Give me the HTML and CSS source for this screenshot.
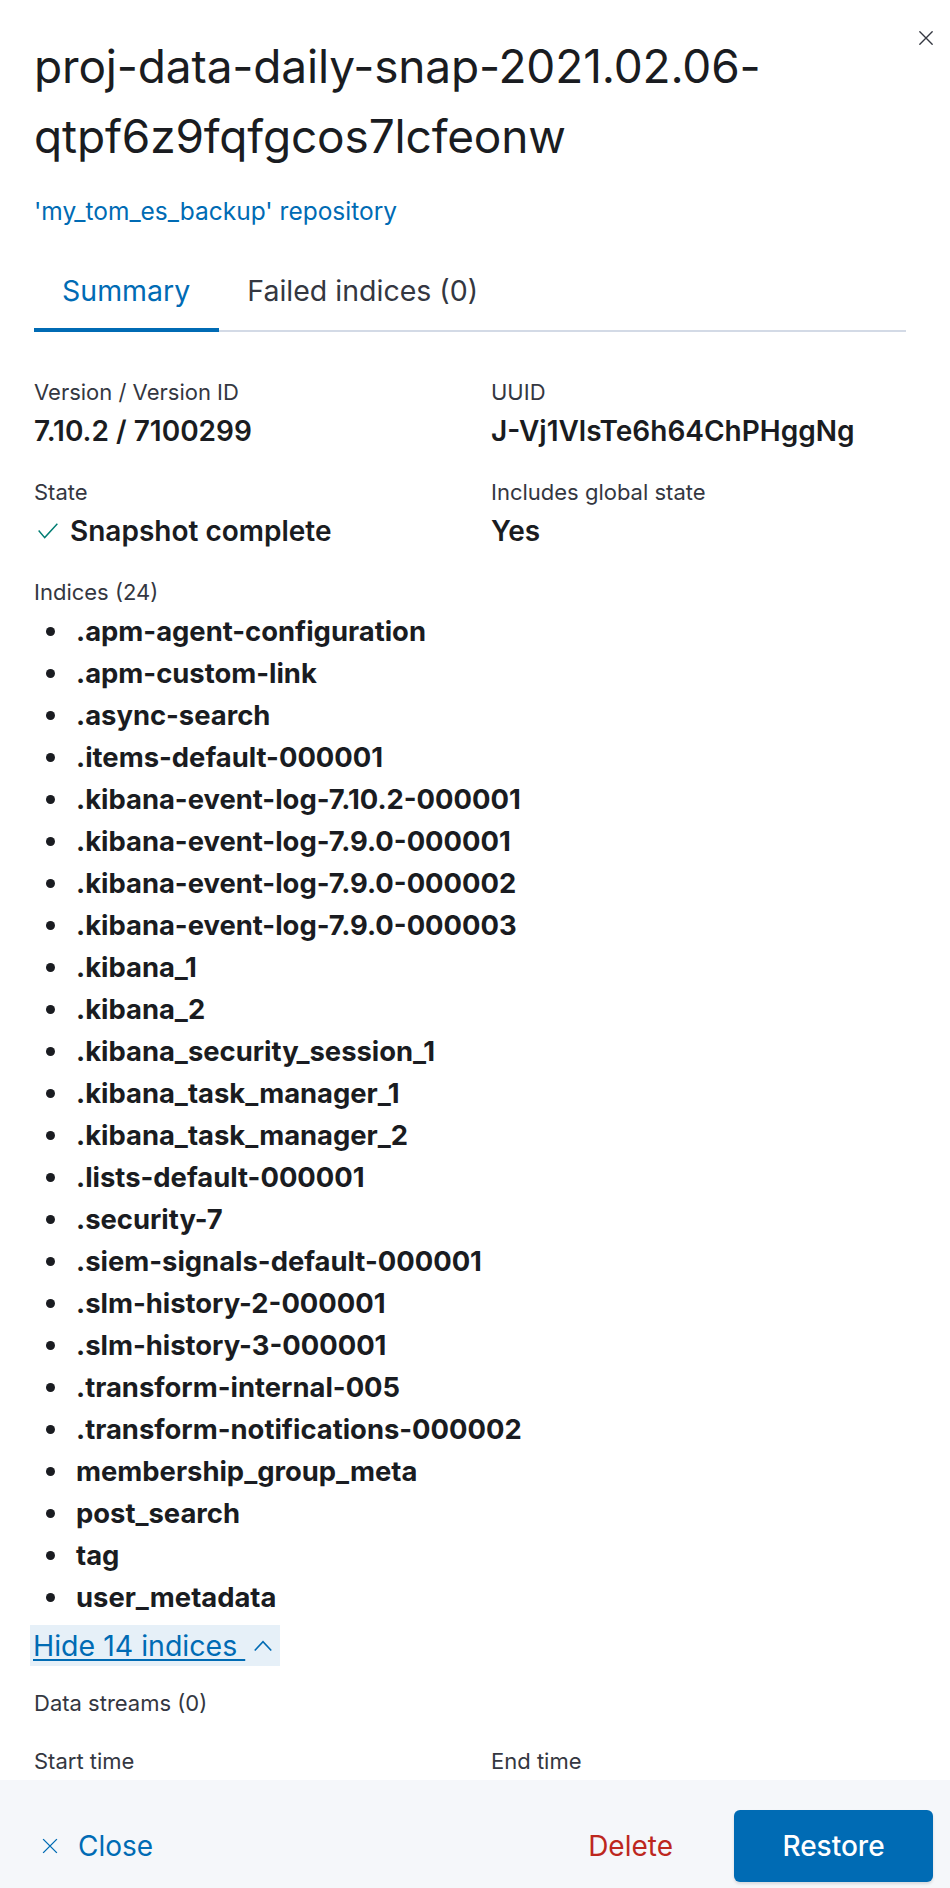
FILE: index.html
```html
<!DOCTYPE html>
<html lang="en">
<head>
<meta charset="utf-8">
<title>Snapshot details</title>
<link rel="stylesheet" href="styles.css">
</head>
<body>
<div class="flyout">
  <button class="flyout-close" aria-label="Close this dialog">
    <svg viewBox="0 0 16 16" width="18" height="18"><path d="M2.5 2.5l11 11M13.5 2.5l-11 11" stroke="currentColor" stroke-width="1.2" fill="none" stroke-linecap="round"/></svg>
  </button>
  <div class="flyout-body">
    <header class="header">
      <h2 class="title">proj-data-daily-snap-2021.02.06-qtpf6z9fqfgcos7lcfeonw</h2>
      <a class="repo-link" href="#">'my_tom_es_backup' repository</a>
    </header>
    <nav class="tabs">
      <button class="tab tab--selected">Summary</button>
      <button class="tab">Failed indices (0)</button>
    </nav>
    <dl class="details">
      <div class="item">
        <dt>Version / Version ID</dt>
        <dd>7.10.2 / 7100299</dd>
      </div>
      <div class="item">
        <dt>UUID</dt>
        <dd>J-Vj1VlsTe6h64ChPHggNg</dd>
      </div>
      <div class="item">
        <dt>State</dt>
        <dd class="state"><svg class="check" viewBox="0 0 20 16" width="22" height="18"><path d="M1.5 7.5l5.5 6.5L18.5 1.5" stroke="currentColor" stroke-width="1.3" fill="none"/></svg>Snapshot complete</dd>
      </div>
      <div class="item">
        <dt>Includes global state</dt>
        <dd>Yes</dd>
      </div>
      <div class="item item--full">
        <dt>Indices (24)</dt>
        <dd>
          <ul class="index-list">
            <li>.apm-agent-configuration</li>
            <li>.apm-custom-link</li>
            <li>.async-search</li>
            <li>.items-default-000001</li>
            <li>.kibana-event-log-7.10.2-000001</li>
            <li>.kibana-event-log-7.9.0-000001</li>
            <li>.kibana-event-log-7.9.0-000002</li>
            <li>.kibana-event-log-7.9.0-000003</li>
            <li>.kibana_1</li>
            <li>.kibana_2</li>
            <li>.kibana_security_session_1</li>
            <li>.kibana_task_manager_1</li>
            <li>.kibana_task_manager_2</li>
            <li>.lists-default-000001</li>
            <li>.security-7</li>
            <li>.siem-signals-default-000001</li>
            <li>.slm-history-2-000001</li>
            <li>.slm-history-3-000001</li>
            <li>.transform-internal-005</li>
            <li>.transform-notifications-000002</li>
            <li>membership_group_meta</li>
            <li>post_search</li>
            <li>tag</li>
            <li>user_metadata</li>
          </ul>
          <button class="toggle"><span class="toggle-text">Hide 14 indices </span><svg class="chevron" viewBox="0 0 16 16" width="24" height="24"><path d="M2.5 11L8 5.2 13.5 11" stroke="currentColor" stroke-width="1.1" fill="none"/></svg></button>
        </dd>
      </div>
      <div class="item item--full">
        <dt>Data streams (0)</dt>
      </div>
      <div class="item">
        <dt>Start time</dt>
      </div>
      <div class="item">
        <dt>End time</dt>
      </div>
    </dl>
  </div>
  <footer class="footer">
    <button class="btn-close">
      <svg viewBox="0 0 16 16" width="20" height="20"><path d="M2.5 2.5l11 11M13.5 2.5l-11 11" stroke="currentColor" stroke-width="1.1" fill="none"/></svg>
      <span>Close</span>
    </button>
    <div class="footer-actions">
      <button class="btn-delete">Delete</button>
      <button class="btn-restore">Restore</button>
    </div>
  </footer>
</div>
</body>
</html>
```

FILE: styles.css
```css
html, body {
  margin: 0;
  padding: 0;
  height: 1888px;
  overflow: hidden;
  background: #fff;
}

body {
  font-family: Inter, "Noto Sans", "Liberation Sans", sans-serif;
  color: #1a1c21;
}

button {
  font-family: inherit;
  border: 0;
  background: none;
  padding: 0;
  margin: 0;
  cursor: pointer;
}

.flyout {
  position: relative;
  width: 950px;
  display: flex;
  flex-direction: column;
}

.flyout-close {
  position: absolute;
  top: 22px;
  right: 8px;
  width: 32px;
  height: 32px;
  display: flex;
  align-items: center;
  justify-content: center;
  color: #343741;
}

.flyout-body {
  height: 1780px;
  overflow: hidden;
  padding: 31px 44px 0 34px;
  box-sizing: border-box;
}

.header {
  display: flex;
  flex-direction: column;
  align-items: flex-start;
}

.title {
  margin: 0;
  font-size: 46px;
  line-height: 70px;
  font-weight: 400;
  letter-spacing: -0.15px;
  color: #1a1c21;
  max-width: 850px;
}

.repo-link {
  margin-top: 24px;
  font-size: 24.5px;
  line-height: 32px;
  color: #006bb4;
  text-decoration: none;
}

.tabs {
  margin-top: 21px;
  display: flex;
  box-shadow: inset 0 -2px 0 #d3dae6;
}

.tab {
  height: 84px;
  padding: 0 29px 0 28px;
  font-size: 28.5px;
  color: #343741;
}

.tab--selected {
  color: #006bb4;
  box-shadow: inset 0 -4px 0 #006bb4;
}

.details {
  margin: 42px 0 0;
  display: grid;
  grid-template-columns: 415px 415px;
  column-gap: 42px;
  row-gap: 22px;
}

.item--full {
  grid-column: 1 / -1;
}

.item dt {
  font-size: 22px;
  line-height: 36px;
  color: #343741;
}

.item dd {
  margin: 0;
  font-size: 28px;
  line-height: 42px;
  font-weight: 600;
  color: #1a1c21;
}

.item dd.state {
  display: flex;
  align-items: center;
}

.check {
  color: #017d73;
  margin: 0 11px 0 3px;
}

.index-list {
  list-style: none;
  margin: 0;
  padding: 0;
}

.item .index-list li {
  display: flex;
  align-items: center;
  height: 42px;
  font-size: 27.4px;
  font-weight: 700;
}

.index-list li::before {
  content: "";
  width: 9px;
  height: 9px;
  border-radius: 50%;
  background: #1a1c21;
  margin: 0 21px 0 12px;
  flex: none;
}

.item .toggle {
  margin: 7px 0 -3px -4px;
  height: 41px;
  width: fit-content;
  padding: 0 5px 0 3px;
  display: flex;
  align-items: center;
  background: #e6f0f8;
  color: #006bb4;
  font-size: 28.5px;
  font-weight: 400;
}

.toggle-text {
  text-decoration: underline;
  text-underline-offset: 3px;
  text-decoration-thickness: 2px;
  white-space: pre;
}

.chevron {
  margin-left: 6px;
}

.footer {
  height: 132px;
  box-sizing: border-box;
  background: #f5f7fa;
  padding: 30px 17px 30px 40px;
  display: flex;
  align-items: center;
  justify-content: space-between;
}

.btn-close {
  display: flex;
  align-items: center;
  color: #006bb4;
  font-size: 28px;
  gap: 18px;
}

.footer-actions {
  display: flex;
  align-items: center;
}

.btn-delete {
  color: #bd271e;
  font-size: 28px;
  margin-right: 61px;
}

.btn-restore {
  width: 199px;
  height: 72px;
  border-radius: 6px;
  background: #006bb4;
  color: #fff;
  font-size: 28px;
  font-weight: 500;
  box-shadow: 0 2px 3px rgba(0, 0, 0, 0.12);
}
```
